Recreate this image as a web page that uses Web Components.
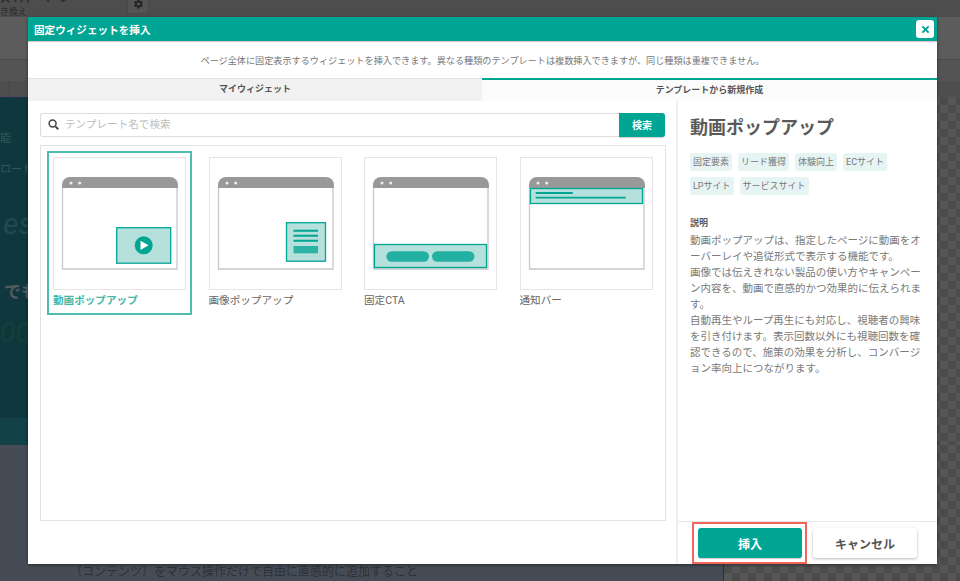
<!DOCTYPE html>
<html lang="ja">
<head>
<meta charset="utf-8">
<title>固定ウィジェットを挿入</title>
<style>
  html, body { margin: 0; height: 100%; overflow: hidden; background: #464c55; }
  body { font-family: Roboto, "Noto Sans CJK JP", sans-serif; }
</style>
</head>
<body>
<widget-page>
  <widget-modal heading="固定ウィジェットを挿入">
    <span slot="lead">ページ全体に固定表示するウィジェットを挿入できます。異なる種類のテンプレートは複数挿入できますが、同じ種類は重複できません。</span>
    <modal-tab slot="tabs">マイウィジェット</modal-tab>
    <modal-tab slot="tabs" active>テンプレートから新規作成</modal-tab>
    <search-box slot="search" placeholder="テンプレート名で検索" action="検索"></search-box>
    <template-card slot="cards" kind="video" selected>動画ポップアップ</template-card>
    <template-card slot="cards" kind="image">画像ポップアップ</template-card>
    <template-card slot="cards" kind="cta">固定CTA</template-card>
    <template-card slot="cards" kind="notice">通知バー</template-card>
    <detail-panel slot="detail" heading="動画ポップアップ">
      <tag-chip slot="tags">固定要素</tag-chip>
      <tag-chip slot="tags">リード獲得</tag-chip>
      <tag-chip slot="tags">体験向上</tag-chip>
      <tag-chip slot="tags">ECサイト</tag-chip>
      <tag-chip slot="tags">LPサイト</tag-chip>
      <tag-chip slot="tags">サービスサイト</tag-chip>
      動画ポップアップは、指定したページに動画をオ<br>ーバーレイや追従形式で表示する機能です。<br>画像では伝えきれない製品の使い方やキャンペー<br>ン内容を、動画で直感的かつ効果的に伝えられま<br>す。<br>自動再生やループ再生にも対応し、視聴者の興味<br>を引き付けます。表示回数以外にも視聴回数を確<br>認できるので、施策の効果を分析し、コンバージ<br>ョン率向上につながります。
    </detail-panel>
    <action-button slot="actions" variant="primary" marked>挿入</action-button>
    <action-button slot="actions">キャンセル</action-button>
  </widget-modal>
</widget-page>

<script>
const FONT = 'Roboto, "Noto Sans CJK JP", sans-serif';
const TEAL = '#00a594';

// dimmed editor page that sits behind the modal
class WidgetPage extends HTMLElement {
  connectedCallback() {
    this.attachShadow({ mode: 'open' });
    this.shadowRoot.innerHTML = `
      <style>
        :host { display: grid; grid-template-rows: 60px 37px 348px 136px; width: 960px; height: 581px; position: relative; overflow: hidden; font-family: ${FONT}; }
        .top { background: linear-gradient(#4d4d4d 0 17px, #5c5c5c 17px); color: #2b2b2b; display: flex; border-bottom: 1px solid #4a4a4a; box-sizing: border-box; }
        .names { width: 127px; white-space: nowrap; font-size: 9px; line-height: 12px; }
        .names b { display: block; font-size: 10px; margin-top: -7px; margin-bottom: 1px; }
        .gear { width: 20px; height: 13px; background: #545454; border: 1px solid #484848; border-top: 0; border-radius: 0 0 3px 3px; display: flex; justify-content: center; overflow: hidden; }
        .gear svg { margin-top: -2px; }
        .band { background: linear-gradient(#545454 0 21px, #4e4e4e 21px); display: flex; }
        .band i { width: 9px; margin-top: 21px; border-right: 1px solid #454545; }
        .band i + i { width: 18px; }
        .hero, .foot { display: flex; }
        .teal { width: 724px; background: linear-gradient(#0f383e 0 320px, #124147 320px); color: #33575b; border-top: 1px solid #1c3350; padding: 33px 0 0 0; box-sizing: border-box; }
        .teal p { margin: 0; white-space: nowrap; overflow: hidden; }
        .teal .a { font-size: 11px; height: 31px; line-height: 16px; margin-left: 0; }
        .teal .b { font-size: 11px; height: 44px; line-height: 16px; }
        .teal .c { font-size: 30px; height: 74px; color: #1f4a50; font-style: italic; line-height: 36px; padding-left: 3px; }
        .teal .d { font-size: 17px; font-weight: 700; color: #545b5e; height: 36px; line-height: 24px; padding-left: 4px; }
        .teal .e { font-size: 28px; color: #173f36; font-style: italic; line-height: 34px; }
        .check { flex: 1; background: repeating-conic-gradient(#4b4b4b 0 25%, #565656 0 50%) 0 0 / 16px 16px; }
        .slate { width: 724px; background: #464c55; border-right: 1px solid #1c3350; box-sizing: border-box; color: #2d3138; font-size: 12px; display: flex; align-items: flex-end; padding: 0 0 0 70px; }
        .slate span { line-height: 17px; }
      </style>
      <div class="top">
        <div class="names"><b>スイパーページ</b>き換え</div>
        <div class="gear"><svg width="12" height="12" viewBox="0 0 24 24" fill="#1f1f1f"><path d="M19.400 13a7.700 7.700 0 0 0 0-2l2.100-1.600-2-3.500-2.500 1a7.600 7.600 0 0 0-1.700-1L15 3.200h-4l-.4 2.700a7.600 7.600 0 0 0-1.700 1l-2.500-1-2 3.500L6.500 11a7.700 7.700 0 0 0 0 2l-2.100 1.600 2 3.500 2.500-1a7.600 7.600 0 0 0 1.700 1l.4 2.700h4l.4-2.700a7.600 7.600 0 0 0 1.700-1l2.500 1 2-3.500zM13 15.500a3.500 3.500 0 1 1 0-7 3.500 3.500 0 0 1 0 7z"/></svg></div>
      </div>
      <div class="band"><i></i><i></i></div>
      <div class="hero">
        <div class="teal">
          <p class="a">能</p>
          <p class="b">ロード</p>
          <p class="c">es</p>
          <p class="d">でも</p>
          <p class="e">000</p>
        </div>
        <div class="check"></div>
      </div>
      <div class="foot">
        <div class="slate"><span>（コンテンツ）をマウス操作だけで自由に直感的に追加すること</span></div>
        <div class="check"></div>
      </div>
      <slot></slot>`;
  }
}

class WidgetModal extends HTMLElement {
  connectedCallback() {
    this.attachShadow({ mode: 'open' });
    this.shadowRoot.innerHTML = `
      <style>
        :host { position: absolute; left: 28px; top: 17px; width: 909px; height: 547px; display: flex; flex-direction: column; background: #fff; box-shadow: 0 1px 3px rgba(0,0,0,.45); font-family: ${FONT}; color: #666; }
        header { height: 24px; background: ${TEAL}; color: #fff; display: flex; align-items: center; justify-content: space-between; padding: 0 3px 0 6px; box-shadow: 0 1px 1px rgba(170,90,110,.35); flex: none; }
        h1 { margin: 0; font-size: 10.600px; font-weight: 700; }
        button { width: 18px; height: 18px; padding: 0; border: 0; border-radius: 3px; background: #fff; display: flex; align-items: center; justify-content: center; }
        .lead { height: 37px; flex: none; display: flex; align-items: center; justify-content: center; font-size: 9.150px; color: #777; }
        .tabs { display: flex; height: 23px; flex: none; }
        .main { flex: 1; display: flex; min-height: 0; }
        .left { width: 648px; box-sizing: border-box; padding: 12px 10px 43px 12px; display: flex; flex-direction: column; gap: 8px; }
        .cards { flex: 1; border: 1px solid #e2e2e2; padding: 5px 6px; display: flex; align-items: flex-start; gap: 10.500px; }
        .right { flex: 1; border-left: 2px solid #eee; display: flex; flex-direction: column; min-width: 0; }
        .detail { flex: 1; min-height: 0; }
        .actions { flex: none; height: 43px; box-sizing: border-box; border-top: 1px solid #e8e8e8; padding: 6px 20px 0 20px; display: flex; align-items: flex-start; gap: 11px; }
      </style>
      <header>
        <h1>${this.getAttribute('heading')}</h1>
        <button aria-label="閉じる"><svg width="9" height="9" viewBox="0 0 10 10"><path d="M1.500 1.500l7 7m0-7l-7 7" stroke="${TEAL}" stroke-width="2.200" fill="none"/></svg></button>
      </header>
      <div class="lead"><slot name="lead"></slot></div>
      <div class="tabs"><slot name="tabs"></slot></div>
      <div class="main">
        <div class="left">
          <slot name="search"></slot>
          <div class="cards"><slot name="cards"></slot></div>
        </div>
        <div class="right">
          <div class="detail"><slot name="detail"></slot></div>
          <div class="actions"><slot name="actions"></slot></div>
        </div>
      </div>`;
  }
}

class ModalTab extends HTMLElement {
  connectedCallback() {
    this.attachShadow({ mode: 'open' });
    this.shadowRoot.innerHTML = `
      <style>
        :host { display: flex; align-items: center; justify-content: center; box-sizing: border-box; padding-bottom: 3px; font-size: 9px; font-weight: 700; color: #555; width: 454px; background: #f1f1f1; border-top: 1px solid #e2e2e2; }
        :host([active]) { flex: 1; background: #fbfbfb; border-top: 2px solid ${TEAL}; padding-bottom: 2px; }
      </style>
      <slot></slot>`;
  }
}

class SearchBox extends HTMLElement {
  connectedCallback() {
    this.attachShadow({ mode: 'open' });
    this.shadowRoot.innerHTML = `
      <style>
        :host { display: flex; height: 24px; flex: none; margin-right: 1px; }
        .field { flex: 1; display: flex; align-items: center; gap: 6px; padding: 0 7px 1px; border: 1px solid #ddd; border-right: 0; border-radius: 3px 0 0 3px; }
        input { flex: 1; border: 0; padding: 0; outline: 0; font: 10.600px ${FONT}; min-width: 0; }
        input::placeholder { color: #bdbdbd; opacity: 1; }
        .go { width: 46px; display: flex; align-items: center; justify-content: center; padding-bottom: 1px; box-sizing: border-box; background: ${TEAL}; color: #fff; font-size: 10px; font-weight: 700; border-radius: 0 3px 3px 0; box-shadow: 0 1px 1px rgba(0,0,0,.2); }
      </style>
      <div class="field">
        <svg width="11" height="11" viewBox="0 0 12 12" fill="none" stroke="#444" stroke-width="1.600"><circle cx="5" cy="5" r="3.800"/><path d="M8 8l3.200 3.200" stroke-width="2"/></svg>
        <input placeholder="${this.getAttribute('placeholder')}">
      </div>
      <div class="go">${this.getAttribute('action')}</div>`;
  }
}

// what sits inside each browser window thumbnail
const ART = {
  video: `<rect x="63.700" y="70.700" width="54" height="35.500" fill="#b5e0db" stroke="${TEAL}" stroke-width="1.300"/>
    <circle cx="90.700" cy="88.300" r="9" fill="${TEAL}"/><path d="M87.500 83.700l8 4.600-8 4.600z" fill="#fff"/>`,
  image: `<rect x="77.500" y="65.700" width="39" height="38.500" fill="#b5e0db" stroke="${TEAL}" stroke-width="1.300"/>
    <path d="M84.500 73.700h24.500M84.500 78.700h24.500M84.500 83.700h24.500" stroke="${TEAL}" stroke-width="2"/>
    <rect x="84.500" y="89" width="24.500" height="7.300" fill="#2cb3a5"/>`,
  cta: `<rect x="10.500" y="87.500" width="112" height="23" fill="#b5e0db" stroke="${TEAL}" stroke-width="1.300"/>
    <rect x="22.400" y="94.300" width="42.600" height="10.400" rx="5.200" fill="#22b0a2"/>
    <rect x="68" y="94.300" width="42.400" height="10.400" rx="5.200" fill="#22b0a2"/>`,
  notice: `<rect x="10.500" y="31.500" width="112" height="15" fill="#b5e0db" stroke="${TEAL}" stroke-width="1.300"/>
    <path d="M15.700 36h37M15.700 40.700h90" stroke="${TEAL}" stroke-width="1.800"/>`
};

class TemplateCard extends HTMLElement {
  connectedCallback() {
    this.attachShadow({ mode: 'open' });
    this.shadowRoot.innerHTML = `
      <style>
        :host { display: block; width: 145px; height: 164px; box-sizing: border-box; border: 2px solid transparent; padding: 4px; color: #666; font-size: 10.600px; }
        :host([selected]) { border-color: #4dbdb0; color: #3fb7a9; font-weight: 700; }
        svg { display: block; width: 133px; height: 133px; box-sizing: border-box; border: 1px solid #e5e5e5; }
        .name { margin-top: 4px; line-height: 14px; white-space: nowrap; }
      </style>
      <svg viewBox="1 1 131 131">
        <path d="M9.500 30v82h114.500V30" fill="#fff" stroke="#c8c8c8" stroke-width="1.300"/>
        <path d="M9 31V28a8 8 0 0 1 8-8h100a8 8 0 0 1 8 8v3z" fill="#999"/>
        <circle cx="18" cy="26" r="1.500" fill="#eee"/><circle cx="26.700" cy="26" r="1.500" fill="#eee"/>
        ${ART[this.getAttribute('kind')]}
      </svg>
      <div class="name"><slot></slot></div>`;
  }
}

class DetailPanel extends HTMLElement {
  connectedCallback() {
    this.attachShadow({ mode: 'open' });
    this.shadowRoot.innerHTML = `
      <style>
        :host { display: block; padding: 15px 10px 0 12px; color: #7a7a7a; font-size: 10.500px; line-height: 16px; }
        h2 { margin: 0 0 13px; font-size: 18px; line-height: 24px; font-weight: 700; color: #5a5a5a; }
        .tags { display: flex; flex-wrap: wrap; gap: 6px; margin-bottom: 21px; }
        h3 { margin: 0 0 3px; font-size: 9px; line-height: 14px; font-weight: 700; color: #5a5a5a; }
        .text { white-space: nowrap; }
      </style>
      <h2>${this.getAttribute('heading')}</h2>
      <div class="tags"><slot name="tags"></slot></div>
      <h3>説明</h3>
      <div class="text"><slot></slot></div>`;
  }
}

class TagChip extends HTMLElement {
  connectedCallback() {
    this.attachShadow({ mode: 'open' });
    this.shadowRoot.innerHTML = `
      <style>
        :host { display: flex; align-items: center; height: 18px; padding: 0 3px; background: #e6f4f3; border-radius: 3px; font-size: 9px; color: #777; }
      </style>
      <slot></slot>`;
  }
}

class ActionButton extends HTMLElement {
  connectedCallback() {
    this.attachShadow({ mode: 'open' });
    this.shadowRoot.innerHTML = `
      <style>
        :host { display: flex; position: relative; align-items: center; justify-content: center; width: 104px; height: 30px; border-radius: 3px; background: #fff; color: #555; font-size: 12px; font-weight: 700; box-shadow: 0 1px 3px rgba(0,0,0,.28); }
        :host([variant="primary"]) { background: ${TEAL}; color: #fff; box-shadow: 0 1px 1px rgba(0,0,0,.2); }
        .mark { position: absolute; inset: -6px -5px -6px -6px; border: 2px solid #f4645a; }
      </style>
      ${this.hasAttribute('marked') ? '<div class="mark"></div>' : ''}
      <slot></slot>`;
  }
}

customElements.define('widget-page', WidgetPage);
customElements.define('widget-modal', WidgetModal);
customElements.define('modal-tab', ModalTab);
customElements.define('search-box', SearchBox);
customElements.define('template-card', TemplateCard);
customElements.define('detail-panel', DetailPanel);
customElements.define('tag-chip', TagChip);
customElements.define('action-button', ActionButton);
</script>
</body>
</html>
